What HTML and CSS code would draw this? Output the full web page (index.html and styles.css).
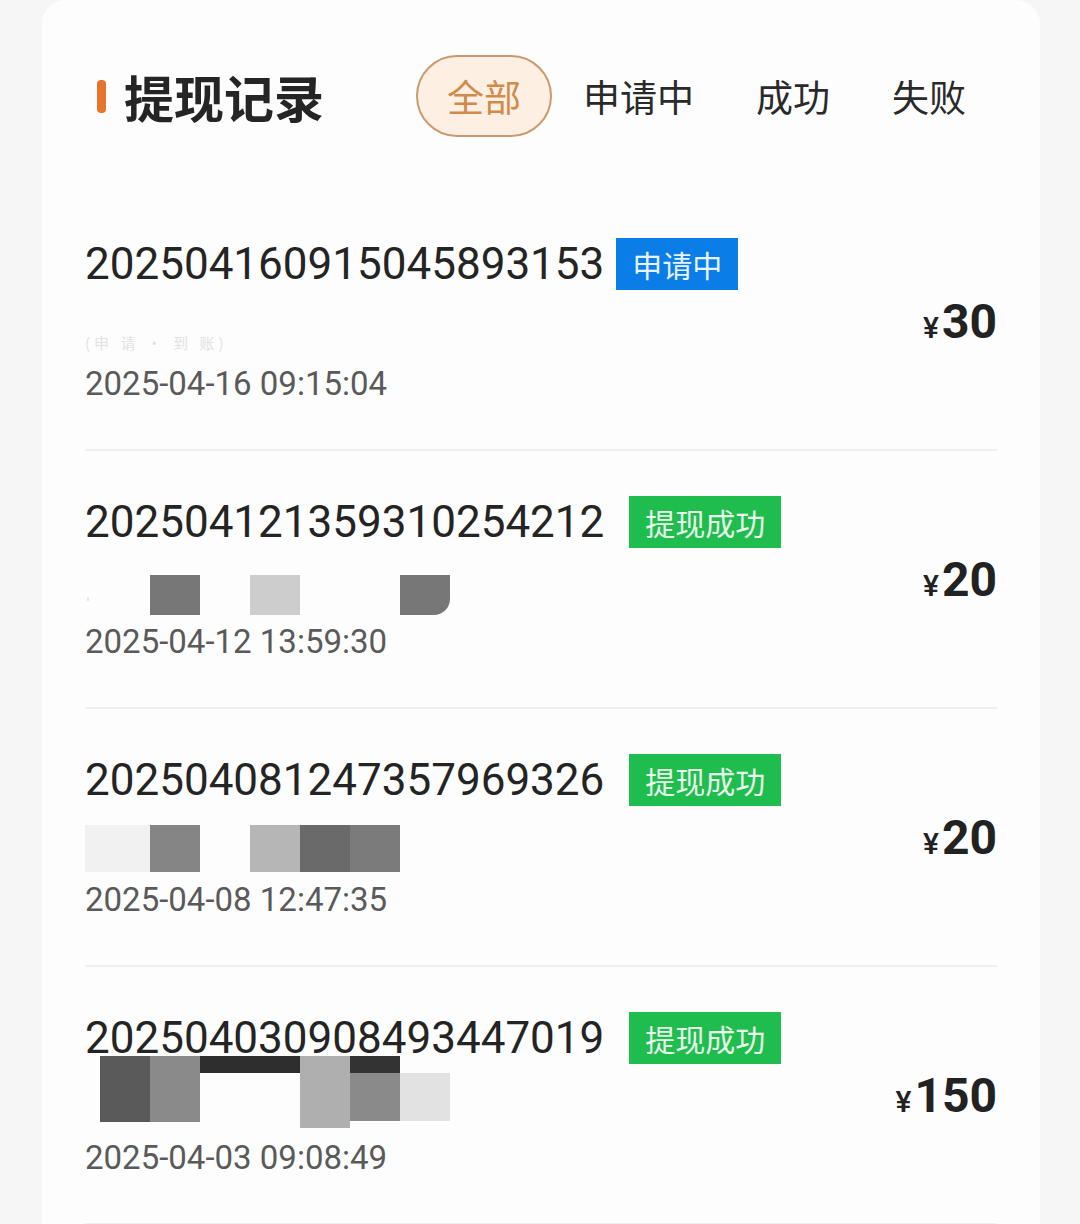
FILE: index.html
```html
<!DOCTYPE html>
<html lang="zh-CN">
<head>
<meta charset="utf-8">
<title>提现记录</title>
<link rel="stylesheet" href="styles.css">
</head>
<body>
<div class="card">
  <div class="header">
    <div class="title"><span class="bar"></span><span class="title-text">提现记录</span></div>
    <div class="tabs">
      <span class="tab active">全部</span>
      <span class="tab">申请中</span>
      <span class="tab">成功</span>
      <span class="tab">失败</span>
    </div>
  </div>
  <div class="list">
    <div class="row">
      <div class="info">
        <div class="line-no"><span class="no">202504160915045893153</span><span class="badge pending">申请中</span></div>
        <div class="mask mask-1"><span class="faint">(申 请 · 到 账)</span></div>
        <div class="date">2025-04-16 09:15:04</div>
      </div>
      <div class="amount"><span class="yen">¥</span><span class="num">30</span></div>
    </div>
    <div class="row">
      <div class="info">
        <div class="line-no"><span class="no">202504121359310254212</span><span class="badge success">提现成功</span></div>
        <div class="mask mask-2">
          <span class="c w65 g-tick"></span><span class="c g77"></span><span class="c"></span><span class="c gcc"></span><span class="c"></span><span class="c"></span><span class="c g77 round-br"></span>
        </div>
        <div class="date">2025-04-12 13:59:30</div>
      </div>
      <div class="amount"><span class="yen">¥</span><span class="num">20</span></div>
    </div>
    <div class="row">
      <div class="info">
        <div class="line-no"><span class="no">202504081247357969326</span><span class="badge success">提现成功</span></div>
        <div class="mask mask-3">
          <span class="c w65 gf2"></span><span class="c g85"></span><span class="c"></span><span class="c gb5"></span><span class="c g6a"></span><span class="c g7a"></span>
        </div>
        <div class="date">2025-04-08 12:47:35</div>
      </div>
      <div class="amount"><span class="yen">¥</span><span class="num">20</span></div>
    </div>
    <div class="row">
      <div class="info">
        <div class="line-no"><span class="no">202504030908493447019</span><span class="badge success">提现成功</span></div>
        <div class="mask mask-4">
          <span class="c w65 g5a-off"></span><span class="c g8a"></span><span class="c w100 band-top"></span><span class="c gb0 tall"></span><span class="c band-mid"></span><span class="c ge2 low"></span>
        </div>
        <div class="date">2025-04-03 09:08:49</div>
      </div>
      <div class="amount"><span class="yen">¥</span><span class="num">150</span></div>
    </div>
  </div>
</div>
</body>
</html>
```
FILE: styles.css
```css
html, body {
  margin: 0;
  padding: 0;
  background: #f6f6f6;
}
body {
  font-family: "Noto Sans CJK SC", "Noto Sans", sans-serif;
  color: #222;
}
.card {
  margin: 0 40px 0 42px;
  background: #fdfdfd;
  border-radius: 24px;
  padding: 0 43px;
  height: 1260px;
  box-sizing: border-box;
}
.header {
  display: flex;
  align-items: center;
  justify-content: space-between;
  padding: 55px 0 56px;
}
.title {
  display: flex;
  align-items: center;
  padding-left: 12px;
}
.bar {
  width: 9px;
  height: 33px;
  border-radius: 4px;
  background: #e8732c;
  margin-right: 18px;
}
.title-text {
  font-size: 50px;
  font-weight: 700;
  line-height: 78px;
  color: #252525;
}
.tabs {
  display: flex;
  align-items: center;
  gap: 0;
}
.tab {
  font-size: 37px;
  line-height: 78px;
  padding: 0 29px;
  color: #2a2a2a;
  border: 2px solid transparent;
  border-radius: 41px;
}
.tab.active {
  background: #fdf0e3;
  border-color: #c99a6f;
  color: #d08b4c;
}
.row {
  display: flex;
  justify-content: space-between;
  align-items: center;
  height: 258px;
  box-sizing: border-box;
  border-bottom: 2px solid #efefef;
}
.info {
  align-self: flex-start;
  padding-top: 41px;
}
.line-no {
  display: flex;
  align-items: center;
  height: 60px;
}
.no {
  font-family: Roboto, "Noto Sans", sans-serif;
  font-size: 44px;
  line-height: 60px;
  color: #242424;
}
.badge {
  font-size: 30px;
  line-height: 52px;
  height: 52px;
  padding: 0 16px;
}
.badge.pending {
  background: #0b7de6;
  color: #e6f3ff;
  margin-left: 12px;
}
.badge.success {
  background: #1fbd4e;
  color: #e8f8ea;
  margin-left: 25px;
}
.mask {
  height: 67px;
  display: flex;
  align-items: flex-start;
  box-sizing: border-box;
}
.faint {
  font-size: 15px;
  color: #e2e2e2;
  margin-top: 38px;
  letter-spacing: 4px;
}
.c {
  width: 50px;
  flex: none;
}
.c.w65 { width: 65px; }
.c.w100 { width: 100px; }
.mask-2 { padding-top: 23px; }
.mask-2 .c { height: 40px; }
.mask-3 { padding-top: 15px; }
.mask-3 .c { height: 47px; }
.mask-4 { margin-top: -12px; height: 79px; }
.mask-4 .c { height: 66px; }
.g-tick { background: linear-gradient(90deg, transparent 0, transparent 2px, #e6e6e6 2px, #e6e6e6 4px, transparent 4px); background-size: 65px 4px; background-repeat: no-repeat; background-position: 0 22px; }
.g77 { background: #777; }
.gcc { background: #cdcdcd; }
.round-br { border-bottom-right-radius: 16px; }
.gf2 { background: #f1f1f1; }
.g85 { background: #858585; }
.gb5 { background: #b6b6b6; }
.g6a { background: #6a6a6a; }
.g7a { background: #7b7b7b; }
.g5a-off { background: linear-gradient(90deg, transparent 0, transparent 15px, #5a5a5a 15px); }
.g8a { background: #8a8a8a; }
.band-top { background: linear-gradient(180deg, #2e2e2e 0, #2e2e2e 17px, #fdfdfd 17px); }
.gb0 { background: #afafaf; }
.mask-4 .c.tall { height: 72px; }
.band-mid { background: linear-gradient(180deg, #333 0, #333 17px, #8a8a8a 17px); }
.mask-4 .c.band-mid { height: 65px; }
.ge2 { background: #e2e2e2; }
.mask-4 .c.low { margin-top: 17px; height: 48px; }
.date {
  font-family: Roboto, "Noto Sans", sans-serif;
  font-size: 33px;
  line-height: 46px;
  height: 46px;
  color: #5a5a5a;
}
.amount {
  display: flex;
  align-items: baseline;
  font-family: Roboto, "Noto Sans", sans-serif;
  color: #222;
}
.yen {
  font-size: 30px;
  font-weight: 500;
  margin-right: 3px;
}
.num {
  font-size: 48px;
  font-weight: 700;
}
```
